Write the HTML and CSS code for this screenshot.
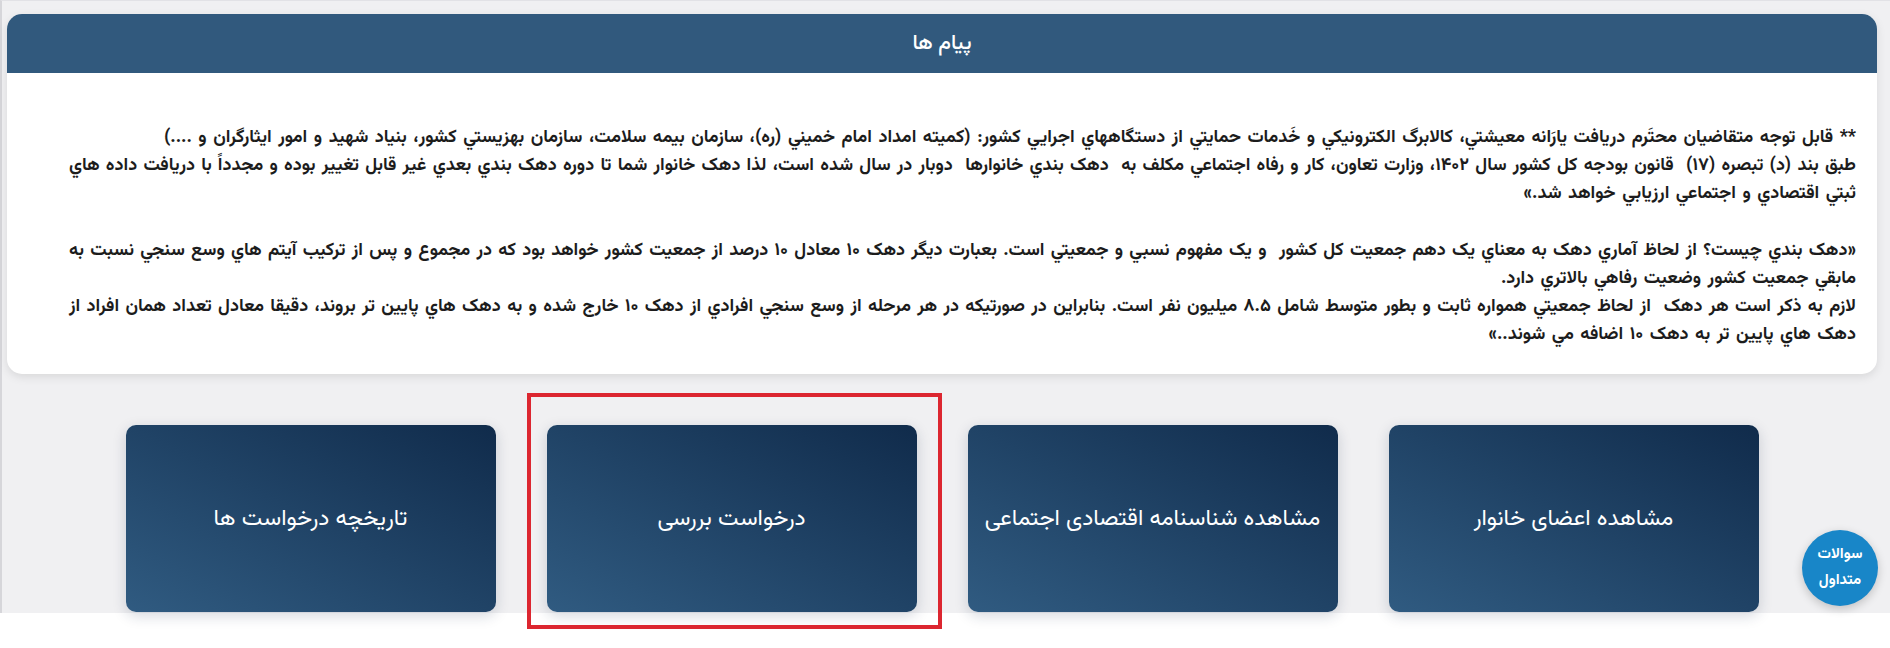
FILE: index.html
```html
<!DOCTYPE html>
<html lang="fa" dir="rtl">
<head>
<meta charset="utf-8">
<title>پیام ها</title>
<link rel="stylesheet" href="styles.css">
</head>
<body>
<div class="page">
  <section class="card">
    <header class="card-head">پیام ها</header>
    <div class="card-body">
      <p class="msg">
        <span class="ln">** قابل توجه متقاضيان محتَرم دريافت يارَانه معيشتي، كالابرگ الكترونيكي و خَدمات حمايتي از دستگاههاي اجرايي كشور: (كميته امداد امام خميني (ره)، سازمان بيمه سلامت، سازمان بهزيستي كشور، بنياد شهيد و امور ايثارگران و ....)</span>
        <span class="ln ln-full">طبق بند (د) تبصره (۱۷)&nbsp; قانون بودجه كل كشور سال ۱۴۰۲، وزارت تعاون، كار و رفاه اجتماعي مكلف به&nbsp; دهک بندي خانوارها&nbsp; دوبار در سال شده است، لذا دهک خانوار شما تا دوره دهک بندي بعدي غير قابل تغيير بوده و مجدداً با دريافت داده هاي</span>
        <span class="ln">ثبتي اقتصادي و اجتماعي ارزيابي خواهد شد.»</span>
      </p>
      <p class="msg msg-second">
        <span class="ln ln-full">«دهک بندي چيست؟ از لحاظ آماري دهک به معناي يک دهم جمعيت کل کشور&nbsp; و يک مفهوم نسبي و جمعيتي است. بعبارت ديگر دهک ۱۰ معادل ۱۰ درصد از جمعيت کشور خواهد بود که در مجموع و پس از ترکيب آيتم هاي وسع سنجي نسبت به</span>
        <span class="ln">مابقي جمعيت کشور وضعيت رفاهي بالاتري دارد.</span>
        <span class="ln ln-full">لازم به ذکر است هر دهک&nbsp; از لحاظ جمعيتي همواره ثابت و بطور متوسط شامل ۸.۵ ميليون نفر است. بنابراين در صورتيکه در هر مرحله از وسع سنجي افرادي از دهک ۱۰ خارج شده و به دهک هاي پايين تر بروند، دقيقا معادل تعداد همان افراد از</span>
        <span class="ln">دهک هاي پايين تر به دهک ۱۰ اضافه مي شوند..»</span>
      </p>
    </div>
  </section>

  <nav class="tiles">
    <a class="tile" href="#">مشاهده اعضای خانوار</a>
    <a class="tile" href="#">مشاهده شناسنامه اقتصادی اجتماعی</a>
    <a class="tile" href="#">درخواست بررسی</a>
    <a class="tile" href="#">تاریخچه درخواست ها</a>
  </nav>
</div>

<a class="faq" href="#">سوالات<br>متداول</a>
<div class="highlight"></div>
</body>
</html>
```
FILE: styles.css
```css
* { box-sizing: border-box; }

html, body {
  margin: 0;
  padding: 0;
  background: #ffffff;
}

body {
  font-family: "Vazirmatn", "Vazir", "Noto Sans Arabic", "Noto Naskh Arabic", "DejaVu Sans", sans-serif;
  color: #1c1c1c;
  width: 1890px;
  height: 648px;
  overflow: hidden;
  position: relative;
}

.page {
  height: 613px;
  background: #f0f0f2;
  border-top: 1px solid #e2e2e6;
  border-left: 2px solid #d6d6da;
  padding: 13px 13px 0 5px;
}

.card {
  background: #ffffff;
  border-radius: 15px;
  box-shadow: 0 3px 10px rgba(0, 0, 0, 0.10);
}

.card-head {
  height: 59px;
  background: #31597d;
  border-radius: 15px 15px 0 0;
  color: #ffffff;
  font-size: 21px;
  font-weight: 500;
  display: flex;
  align-items: center;
  justify-content: center;
}

.card-body {
  padding: 51px 21px 25px 62px;
}

.msg {
  margin: 0;
  font-size: 18px;
  font-weight: 700;
  line-height: 28px;
}

.ln {
  display: block;
  text-align: right;
  white-space: nowrap;
  word-spacing: 2px;
}

.ln-full {
  white-space: normal;
  word-spacing: 0;
  text-align: justify;
  text-align-last: justify;
}

.msg-second {
  margin-top: 29px;
}

.tiles {
  margin-top: 51px;
  display: flex;
  justify-content: center;
  gap: 51px;
}

.tile {
  width: 370px;
  height: 187px;
  border-radius: 10px;
  background: linear-gradient(to bottom left, #102b4b 0%, #305b81 100%);
  box-shadow: 0 4px 14px rgba(20, 40, 70, 0.18);
  color: #ffffff;
  text-decoration: none;
  font-size: 23px;
  display: flex;
  align-items: center;
  justify-content: center;
}

.faq {
  position: absolute;
  left: 1802px;
  top: 530px;
  width: 76px;
  height: 76px;
  border-radius: 50%;
  background: #1886c8;
  box-shadow: 0 3px 10px rgba(0, 0, 0, 0.2);
  color: #ffffff;
  text-decoration: none;
  font-size: 15px;
  font-weight: 700;
  line-height: 26px;
  display: flex;
  align-items: center;
  justify-content: center;
  text-align: center;
}

.highlight {
  position: absolute;
  left: 527px;
  top: 393px;
  width: 415px;
  height: 236px;
  border: 4px solid #dc2630;
  pointer-events: none;
}
```
